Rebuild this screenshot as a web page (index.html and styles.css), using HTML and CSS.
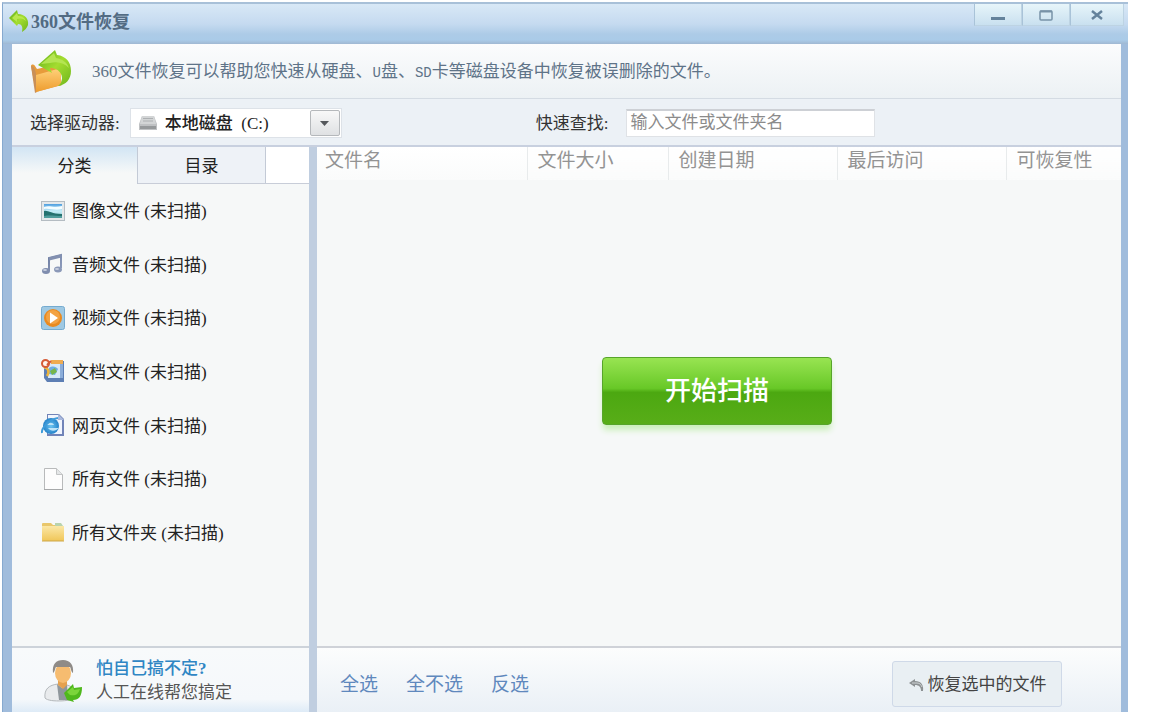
FILE: index.html
```html
<!DOCTYPE html>
<html lang="zh-CN">
<head>
<meta charset="utf-8">
<title>360文件恢复</title>
<link rel="stylesheet" href="styles.css">
</head>
<body>
<svg class="defs" width="0" height="0" aria-hidden="true">
  <defs>
    <linearGradient id="leaf" x1="0" y1="0" x2="1" y2="1"><stop offset="0" stop-color="#5fae16"/><stop offset=".5" stop-color="#a4dd30"/><stop offset="1" stop-color="#6db51c"/></linearGradient>
    <linearGradient id="amber" x1="0" y1="0" x2="0" y2="1"><stop offset="0" stop-color="#ffd27c"/><stop offset="1" stop-color="#ee9c2e"/></linearGradient>
    <linearGradient id="folder" x1="0" y1="0" x2="0" y2="1"><stop offset="0" stop-color="#fbe7a6"/><stop offset="1" stop-color="#f0c658"/></linearGradient>
    <linearGradient id="sky" x1="0" y1="0" x2="0" y2="1"><stop offset="0" stop-color="#4f9fe0"/><stop offset=".5" stop-color="#c5eef8"/><stop offset="1" stop-color="#8fd0d8"/></linearGradient>
    <linearGradient id="note" x1="0" y1="0" x2="1" y2="1"><stop offset="0" stop-color="#6f7fa3"/><stop offset="1" stop-color="#8f9dbd"/></linearGradient>
    <radialGradient id="globe"><stop offset="0" stop-color="#6cc4f2"/><stop offset="1" stop-color="#2583c9"/></radialGradient>
  </defs>
</svg>
<div class="window">
  <header class="titlebar">
    <svg class="logo" width="20" height="22" viewBox="0 0 20 22" aria-hidden="true"><path d="M0 8 8 0l1 4c7 0 11 5 10 11-1 3-3 5-6 7 1-5 0-8-4-8l-1 2z" fill="url(#leaf)"/><path d="M3 8 8 3l1 3c4 0 7 2 8 5-3-3-6-3-9-2v3z" fill="#b9e84e"/></svg>
    <h1 class="title">360文件恢复</h1>
    <div class="window-buttons">
      <button class="win-btn" type="button" aria-label="最小化"><svg width="14" height="14" viewBox="0 0 14 14"><path d="M0 10.500h14" stroke="#64829b" stroke-width="3"/></svg></button>
      <button class="win-btn" type="button" aria-label="最大化"><svg width="14" height="14" viewBox="0 0 14 14"><rect x="1" y="3" width="12" height="9" rx="1" fill="none" stroke="#7893a8" stroke-width="1.500"/><path d="M1 3.500h12" stroke="#7893a8" stroke-width="2"/></svg></button>
      <button class="win-btn close" type="button" aria-label="关闭"><svg width="14" height="14" viewBox="0 0 14 14"><path d="m2 3 10 8M12 3 2 11" stroke="#64829b" stroke-width="2.500"/></svg></button>
    </div>
  </header>
  <div class="frame">
    <section class="banner">
      <svg width="42" height="44" viewBox="0 0 42 44" aria-hidden="true"><path d="M1 17c0-2 3-2 4 0l2 3 18-4 4 2 3 18L6 43z" fill="#e79b3b"/><path d="M1 17c3 0 4 3 5 8l1 18-2 1z" fill="#c98f57"/><path d="m6 26 25-7v17L6 43z" fill="url(#amber)"/><path d="m8 16 17-15 2 5c9 1 14 7 14 16 0 8-5 14-13 15 4-3 5-8 3-12-2-4-6-6-11-6l2 5z" fill="url(#leaf)"/><path d="m11 15 13-11 2 5c6 1 11 4 13 10-5-5-11-7-19-5z" fill="#b5e552"/></svg>
      <p class="intro">360文件恢复可以帮助您快速从硬盘、<span class="latin">U</span>盘、<span class="latin">SD</span>卡等磁盘设备中恢复被误删除的文件。</p>
    </section>
    <section class="toolbar">
      <label class="label" for="drive">选择驱动器:</label>
      <div class="drive">
        <svg class="drive-icon" width="18" height="14" viewBox="0 0 18 14" aria-hidden="true"><path d="M3 0h12l3 8v6H0V8z" fill="#bfc1c3"/><path d="M3 0h12l2 8H1z" fill="#d3d5d6"/><path d="M4 2.500h10M4 5h10" stroke="#adb0b2"/><path d="M1 10h16v3H1z" fill="#96999b"/></svg>
        <select id="drive" class="drive-select"><option>本地磁盘&nbsp; (C:)</option></select>
        <span class="arrow"><svg width="9" height="5" viewBox="0 0 9 5"><path d="M0 0h9L4.500 5z" fill="#55585c"/></svg></span>
      </div>
      <div class="search">
        <label class="label" for="find">快速查找:</label>
        <input id="find" class="find" type="text" placeholder="输入文件或文件夹名">
      </div>
    </section>
    <div class="content">
      <aside class="sidebar">
        <div class="tabs" role="tablist">
          <button class="tab active" type="button" role="tab" aria-selected="true">分类</button>
          <button class="tab" type="button" role="tab" aria-selected="false">目录</button>
        </div>
        <ul class="types">
          <li class="type"><svg width="24" height="24" viewBox="0 0 24 24"><rect x=".5" y="2.500" width="23" height="19" fill="#e4e8ea" stroke="#b4bcc2"/><path d="M3 5h18v14H3z" fill="url(#sky)"/><path d="M3 8c5-2 10 1 18-1v3c-7 2-12-1-18 0z" fill="#f3fdff"/><path d="M3 12c4-1 7 3 18 3v4H3z" fill="#24716f"/><path d="M3 17c6-1 11 0 18 0v2H3z" fill="#4e9c9c"/></svg><span>图像文件 (未扫描)</span></li>
          <li class="type"><svg width="24" height="24" viewBox="0 0 24 24"><path d="M8 19V6l12-3v13" fill="none" stroke="url(#note)" stroke-width="2"/><path d="m8 7 12-3" stroke="#8290b0" stroke-width="3"/><ellipse cx="5" cy="19" rx="4" ry="3" fill="#7f8dae"/><ellipse cx="17" cy="17.500" rx="4" ry="3" fill="#8b99b8"/><ellipse cx="4" cy="18" rx="2" ry="1" fill="#c7cfdf"/><ellipse cx="16" cy="17" rx="2" ry="1" fill="#c7cfdf"/></svg><span>音频文件 (未扫描)</span></li>
          <li class="type"><svg width="24" height="24" viewBox="0 0 24 24"><rect x=".5" y=".5" width="23" height="23" rx="2" fill="#9fc9e3" stroke="#74abd0"/><circle cx="12" cy="12" r="9" fill="#e98a1f"/><circle cx="12" cy="11" r="7" fill="#f3a344"/><path d="M9 6.500 17 12l-8 5.500z" fill="#fff"/></svg><span>视频文件 (未扫描)</span></li>
          <li class="type"><svg width="24" height="24" viewBox="0 0 24 24"><path d="M6 2h17v21H6l-3-4V10z" fill="#5d7fb4"/><path d="M7 3h14v16H7z" fill="#d7e9f8"/><path d="M10 1h12v4H10z" fill="#efac51"/><path d="M19 5h3v14h-3z" fill="#8badd9"/><path d="M8 9c4-3 7-1 9 1l-3 6-6-1z" fill="#6eaee4"/><path d="m9 12 5-3 2 4-5 3z" fill="#76b64b"/><path d="M3 8c4 1 6 4 3 9" fill="none" stroke="#edb53d" stroke-width="2.500"/><circle cx="4.500" cy="4.500" r="3.500" fill="#fff5ee" stroke="#d65b37" stroke-width="2"/><path d="m6 6 4-4" stroke="#d65b37" stroke-width="2"/></svg><span>文档文件 (未扫描)</span></li>
          <li class="type"><svg width="24" height="24" viewBox="0 0 24 24"><path d="M6 1h12l5 5v17H6z" fill="#7184b8"/><path d="M7 2h10v5h4v14H7z" fill="#f1f5fd"/><path d="m17 1 6 6h-6z" fill="#aab9dc"/><circle cx="10" cy="13" r="8" fill="url(#globe)"/><path d="M6 12c1-3 6-3 7 0zM7 15h11c-3 3-8 4-11 0z" fill="#bfe4f7"/><path d="M1 20C0 15 9 6 17 5" fill="none" stroke="#3e9bd9" stroke-width="2"/></svg><span>网页文件 (未扫描)</span></li>
          <li class="type"><svg width="24" height="24" viewBox="0 0 24 24"><path d="M3.500 1.500h12l6 6v15h-18z" fill="#fdfdfd" stroke="#b8babb"/><path d="M15.500 1.500v6h6" fill="#e4e6e7" stroke="#c2c4c5"/><path d="M3 22.500h19" stroke="#a7a9aa"/></svg><span>所有文件 (未扫描)</span></li>
          <li class="type"><svg width="24" height="24" viewBox="0 0 24 24"><path d="M1 4q0-1 1-1h8l2 2h8l3 2v13H1z" fill="#e9c76c"/><path d="M14 3h6l2 3h-8z" fill="#b9d3ad"/><path d="M1 6h22v14q0 1-1 1H2q-1 0-1-1z" fill="url(#folder)"/><path d="M1 21h22" stroke="#cda749"/></svg><span>所有文件夹 (未扫描)</span></li>
        </ul>
        <a class="help" href="#help">
          <svg width="38" height="44" viewBox="0 0 38 44" aria-hidden="true"><path d="M1 39c-1-9 4-13 13-14l9 1c7 2 9 6 9 12 0 4-27 6-31 1z" fill="#e9ebed" stroke="#b4b8bb"/><path d="m13 25 5 4 5-4 1 16H15z" fill="#8f969b"/><path d="M14 20h9v6l-4 4-5-4z" fill="#e5a14f"/><ellipse cx="19" cy="14" rx="8" ry="10" fill="#f6bc70"/><path d="M9 14C8 5 12 1 19 1s11 5 10 13c-2-1-2-5-3-6H12c-1 1-1 5-3 6z" fill="#8f8b87"/><path d="m20 34 9-9 1 4 8-1c0 9-3 13-9 13l1 2-7-2z" fill="#4fb81c"/><path d="m23 33 6-5 1 3 6-1c-2 6-5 7-10 6z" fill="#7bd53a"/></svg>
          <span class="help-text"><strong class="help-title">怕自己搞不定<b>?</b></strong><span>人工在线帮您搞定</span></span>
        </a>
      </aside>
      <main class="main">
        <table class="files">
          <colgroup><col><col class="c-size"><col class="c-date"><col class="c-date"><col class="c-state"></colgroup>
          <thead><tr><th>文件名</th><th>文件大小</th><th>创建日期</th><th>最后访问</th><th>可恢复性</th></tr></thead>
        </table>
        <div class="stage"><button class="scan" type="button">开始扫描</button></div>
        <footer class="actions">
          <a href="#all">全选</a>
          <a href="#none">全不选</a>
          <a href="#invert">反选</a>
          <button class="recover" type="button"><svg width="17" height="14" viewBox="0 0 17 14" aria-hidden="true"><path d="M1 5 7 1v2c6 0 9 4 8 10h-2c0-4-2-6-6-6v2z" fill="#8d9193"/><path d="M4 5h5c3 0 4 2 5 4" fill="none" stroke="#ced3d5"/></svg>恢复选中的文件</button>
        </footer>
      </main>
    </div>
  </div>
</div>
</body>
</html>
```
FILE: styles.css
```css
* { box-sizing: border-box; }

body {
  margin: 0;
  padding: 2px 27px 0 2px;
  background: #fff;
  color: #333;
  font: 17px/24px "Liberation Serif", "Noto Sans CJK SC", sans-serif;
}

button, input, select { font: inherit; color: inherit; }
.defs { position: absolute; }

.window {
  display: flex;
  flex-direction: column;
  min-height: calc(100vh - 2px);
  background: #a0bcdc;
  border-top: 2px solid #a8c0d8;
  border-left: 1px solid #86a9cf;
}

.titlebar {
  display: flex;
  align-items: flex-start;
  height: 40px;
  padding: 0 4px 0 6px;
  background: linear-gradient(#d8e8f6, #c5daf0 50%, #adcbe7 75%, #aacbe8 90%, #a0b8d2);
}
.logo { margin-top: 6px; }
.title {
  margin: 6px 0 0 2px;
  color: #526b83;
  font-size: 18px;
  line-height: 24px;
}
.window-buttons { display: flex; margin-left: auto; }
.win-btn {
  display: grid;
  place-items: center;
  width: 48px;
  height: 22px;
  padding: 0;
  border: 1px solid #bdd3e3;
  border-top: 0;
  border-left-color: #a9c3d8;
  background: linear-gradient(#e7f5fa, #c9e0ef);
}
.win-btn.close { width: 54px; }

.frame {
  display: flex;
  flex: 1;
  flex-direction: column;
  margin: 0 7px 0 9px;
  background: #f6f8f8;
}
.banner {
  display: flex;
  align-items: center;
  gap: 20px;
  height: 55px;
  padding: 0 18px;
  border-bottom: 1px solid #d4dbe3;
  background: linear-gradient(#fbfcfd, #ecf1f4);
}
.intro {
  margin: 0;
  padding-top: 2px;
  color: #5e7388;
}
.latin { font-family: "Liberation Mono", monospace; font-size: 14px; }

.toolbar {
  display: flex;
  align-items: center;
  height: 48px;
  padding: 2px 18px 0;
  border-bottom: 2px solid #c8d0df;
  background: #ecf1f6;
}
.label { padding-top: 2px; color: #333; }
.drive {
  position: relative;
  width: 212px;
  margin-left: 10px;
}
.drive-select {
  appearance: none;
  display: block;
  width: 100%;
  height: 30px;
  padding: 2px 36px 0 34px;
  border: 1px solid #dde2e8;
  border-radius: 0;
  background: #fff;
  color: #222;
  font-weight: 500;
}
.drive-icon {
  position: absolute;
  top: 8px;
  left: 9px;
  pointer-events: none;
}
.arrow {
  position: absolute;
  top: 2px;
  right: 2px;
  display: grid;
  place-items: center;
  width: 30px;
  height: 26px;
  border: 1px solid #b5b8bb;
  border-radius: 2px;
  background: linear-gradient(#f8f8f8, #dfe1e3);
  pointer-events: none;
}
.search {
  display: flex;
  align-items: center;
  gap: 18px;
  margin-left: 194px;
}
.find {
  width: 249px;
  height: 28px;
  padding: 0 3px 2px;
  border: 1px solid #dfe2e6;
  border-top: 2px solid #cdd0d5;
  background: #fff;
}
.find::placeholder { color: #8b8b8b; opacity: 1; }

.content { display: flex; flex: 1; }
.sidebar {
  display: flex;
  flex-direction: column;
  width: 305px;
  border-right: 8px solid #c0cee0;
}
.tabs {
  display: flex;
  height: 37px;
  background: #fff;
  border-bottom: 1px solid #c8cdd8;
}
.tab {
  width: 128px;
  padding: 4px 0 0;
  border: 0;
  border-right: 1px solid #c3cad6;
  background: #eef2f7;
  color: #222;
}
.tab.active {
  width: 126px;
  margin-bottom: -1px;
  padding-top: 2px;
  background: linear-gradient(#d2e5f4, #f6f8f8 70%);
}
.types {
  display: grid;
  grid-template-rows: repeat(7, 1fr);
  height: 375px;
  margin: 0;
  padding: 0 0 0 29px;
  list-style: none;
  color: #222;
}
.type { display: flex; align-items: center; gap: 7px; }
.type span { padding-top: 3px; }

.help {
  display: flex;
  align-items: center;
  gap: 14px;
  height: 66px;
  margin-top: auto;
  padding: 2px 32px 0;
  border-top: 2px solid #cdd3da;
  background: linear-gradient(#f8fafb, #f5f8fb 80%, #deebf7);
  color: #555;
  text-decoration: none;
}
.help-text { display: grid; }
.help-title { color: #2f86c4; font-weight: 500; }

.main { display: flex; flex: 1; flex-direction: column; }
.files {
  width: 100%;
  table-layout: fixed;
  border-collapse: collapse;
}
.c-size { width: 141px; }
.c-date { width: 169px; }
.c-state { width: 115px; }
.files th {
  height: 33px;
  padding: 0 0 5px 10px;
  border-left: 1px solid #e8ebec;
  background: linear-gradient(#fff, #fafbfb);
  color: #939393;
  font-size: 19px;
  font-weight: 400;
  text-align: left;
}
.files th:first-child { padding-left: 8px; border-left: 0; }
.stage {
  display: grid;
  flex: 1;
  place-items: center;
  padding: 0 4px 44px 0;
}
.scan {
  width: 230px;
  height: 68px;
  padding: 2px 0 0;
  border: 1px solid #57a52a;
  border-radius: 4px;
  background: linear-gradient(#98e452, #68c827 46%, #4ca811 52%, #58ad18);
  box-shadow: 0 6px 6px -1px #c9efb8;
  color: #fff;
  font-size: 26px;
  font-weight: 500;
}
.actions {
  display: flex;
  align-items: center;
  gap: 28px;
  height: 66px;
  padding: 7px 59px 0 23px;
  border-top: 2px solid #cfd2d8;
  background: linear-gradient(#fcfdfd, #eaf0f6);
}
.actions a { padding-top: 3px; color: #5f88bd; font-size: 19px; text-decoration: none; }
.recover {
  display: flex;
  align-items: center;
  justify-content: center;
  gap: 3px;
  width: 170px;
  height: 46px;
  margin-left: auto;
  padding: 3px 0 0;
  border: 1px solid #cfd9e8;
  border-radius: 3px;
  background: #e9eff3;
  color: #444;
}
```
